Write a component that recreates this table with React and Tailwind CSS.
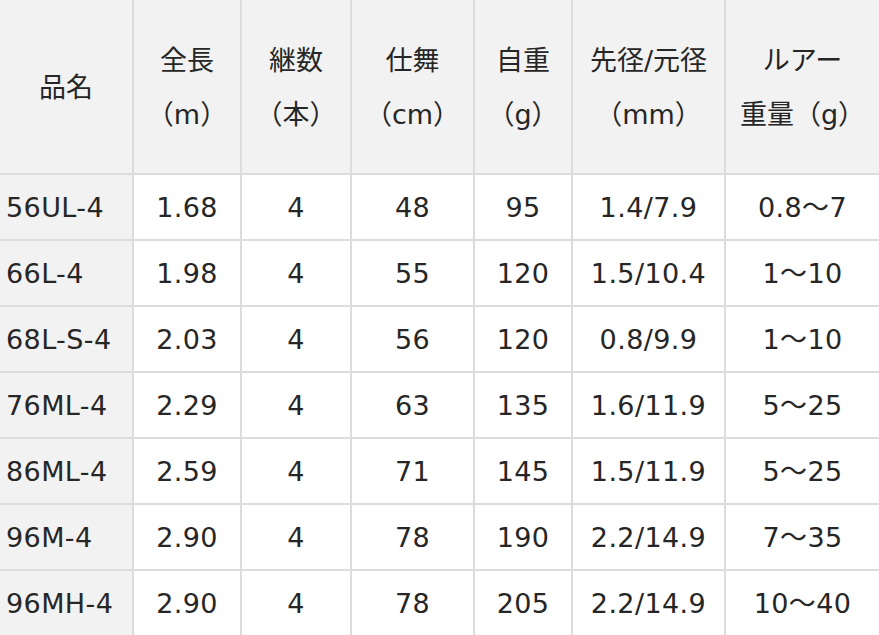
import React from "react";

const cols = ["w-[134px]", "w-[108px]", "w-[110px]", "w-[123px]", "w-[98px]", "w-[153px]", "w-[153px]"];

const header = [
  ["品名"],
  ["全長", "（m）"],
  ["継数", "（本）"],
  ["仕舞", "（cm）"],
  ["自重", "（g）"],
  ["先径/元径", "（mm）"],
  ["ルアー", "重量（g）"],
];

const rows = [
  ["56UL-4", "1.68", "4", "48", "95", "1.4/7.9", "0.8～7"],
  ["66L-4", "1.98", "4", "55", "120", "1.5/10.4", "1～10"],
  ["68L-S-4", "2.03", "4", "56", "120", "0.8/9.9", "1～10"],
  ["76ML-4", "2.29", "4", "63", "135", "1.6/11.9", "5～25"],
  ["86ML-4", "2.59", "4", "71", "145", "1.5/11.9", "5～25"],
  ["96M-4", "2.90", "4", "78", "190", "2.2/14.9", "7～35"],
  ["96MH-4", "2.90", "4", "78", "205", "2.2/14.9", "10～40"],
];

export default function App() {
  return (
    <div
      className="w-[879px] h-[635px] overflow-hidden bg-white text-[#262626] text-[27px]"
      style={{ fontFamily: '"DejaVu Sans", "Noto Sans CJK JP", sans-serif' }}
    >
      <div className="flex h-[175px] bg-[#f2f2f2] border-b-2 border-[#dcdcdc]">
        {header.map((h, i) => (
          <div
            key={i}
            className={`${cols[i]} shrink-0 flex flex-col items-center justify-center pt-[2px] leading-[54px] ${i < 6 ? "border-r-2 border-[#dcdcdc]" : ""}`}
          >
            {h.map((t, j) => (
              <div key={j} className="whitespace-nowrap">{t}</div>
            ))}
          </div>
        ))}
      </div>
      {rows.map((r, ri) => (
        <div key={ri} className="flex h-[66px] border-b-2 border-[#dcdcdc]">
          {r.map((c, i) => (
            <div
              key={i}
              className={`${cols[i]} shrink-0 flex items-center whitespace-nowrap pt-[3px] tracking-[0.4px] ${i === 0 ? "bg-[#f2f2f2] pl-[6px] justify-start" : "justify-center"} ${i < 6 ? "border-r-2 border-[#dcdcdc]" : ""}`}
            >
              {c}
            </div>
          ))}
        </div>
      ))}
    </div>
  );
}
